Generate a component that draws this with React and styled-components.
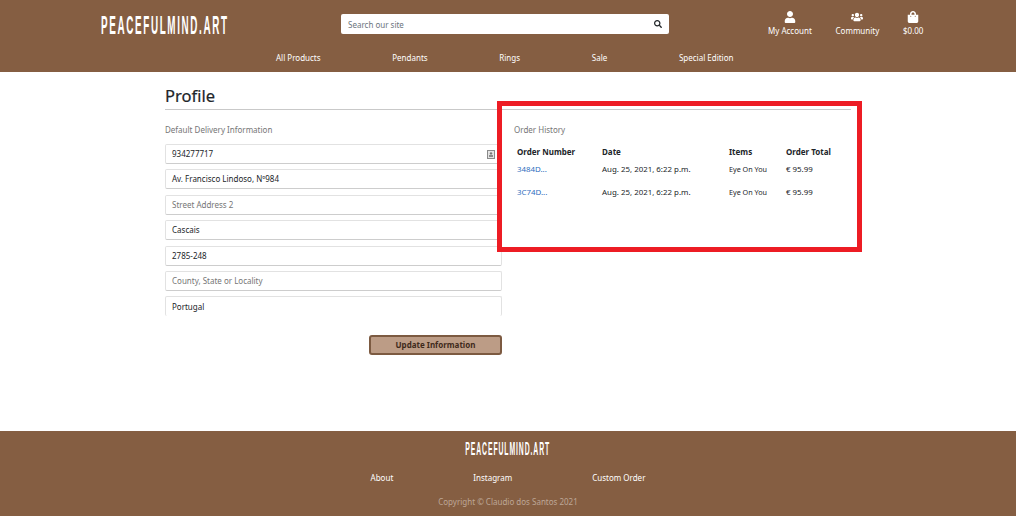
import React from "react";
import styled, { createGlobalStyle } from "styled-components";
import { FaUser, FaUsers, FaShoppingBag, FaSearch } from "react-icons/fa";

const Global = createGlobalStyle`
  html, body { margin: 0; padding: 0; background: #fff; }
  body { font-family: "Noto Sans", "Open Sans", sans-serif; color: #212529; }
  * { box-sizing: border-box; }
`;

const Page = styled.div`
  position: relative;
  width: 1016px;
  height: 516px;
  overflow: hidden;
  display: flex;
  flex-direction: column;
`;

const Header = styled.header`
  height: 72px;
  background: #855e42;
  color: #fff;
  display: flex;
  flex-direction: column;
`;

const TopRow = styled.div`
  height: 51px;
  padding: 10px 0 0 101px;
  display: flex;
  align-items: flex-start;
`;

const Logo = styled.div`
  font-family: "Liberation Sans", sans-serif;
  font-weight: 700;
  color: #fff;
  white-space: nowrap;
  transform-origin: ${p => (p.$small ? "center" : "left")} center;
  transform: scaleX(0.38);
  font-size: ${p => (p.$small ? 18 : 26)}px;
  line-height: ${p => (p.$small ? 20 : 30)}px;
  letter-spacing: ${p => (p.$small ? 2.4 : 4.3)}px;
`;

const LogoSlot = styled.div`
  width: 240px;
  flex: none;
`;

const Search = styled.div`
  width: 328px;
  height: 20px;
  margin-top: 4px;
  background: #fff;
  border-radius: 2px;
  display: flex;
  align-items: center;
  justify-content: space-between;
  padding: 0 7px 0 7px;
  font-size: 8px;
  color: #6c757d;
  svg { color: #212529; font-size: 8px; }
`;

const Account = styled.div`
  margin-left: 99px;
  display: flex;
  gap: 23.7px;
  margin-top: 1px;
`;

const AccountItem = styled.div`
  display: flex;
  flex-direction: column;
  align-items: center;
  font-size: 8px;
  line-height: 11px;
  gap: 2px;
  color: #fff;
  svg { font-size: 12px; display: block; }
`;

const Nav = styled.nav`
  padding-left: 276px;
  display: flex;
  gap: 71.7px;
  font-size: 8px;
  line-height: 14px;
`;

const Main = styled.main`
  flex: 1;
  padding: 12px 0 0 165px;
  width: 851px;
`;

const Title = styled.h1`
  margin: 0 0 1px;
  font-size: 16.5px;
  line-height: 24px;
  font-weight: 400;
  color: #212529;
  -webkit-text-stroke: 0.2px #212529;
`;

const Rule = styled.hr`
  margin: 0;
  border: 0;
  border-top: 1px solid #c9c9c9;
  margin-bottom: 14px;
`;

const Columns = styled.div`
  display: grid;
  grid-template-columns: 337px 337px;
  gap: 12px;
`;

const Caption = styled.div`
  font-size: 8px;
  line-height: 12px;
  color: #767676;
  margin-bottom: 8px;
`;

const Fields = styled.div`
  display: flex;
  flex-direction: column;
  gap: 5.4px;
`;

const Field = styled.div`
  position: relative;
  height: 20px;
  border: 1px solid #e2e2e2;
  border-bottom: ${p => (p.$open ? "0" : "1px solid #cdcdcd")};
  border-radius: 2px;
  padding: 0 6px;
  font-size: 8px;
  line-height: 18px;
  color: ${p => (p.$placeholder ? "#767676" : "#212529")};
  display: flex;
  align-items: center;
  justify-content: space-between;
`;

const FieldIcon = styled.svg`
  width: 8px;
  height: 9px;
  flex: none;
  margin-right: 0;
`;

const Actions = styled.div`
  display: flex;
  justify-content: flex-end;
  margin-top: 19px;
`;

const Button = styled.button`
  width: 133px;
  height: 20px;
  background: #bc9c86;
  border: 2px solid #7c5a41;
  border-radius: 3px;
  font: 700 8px "Noto Sans", sans-serif;
  color: #3f2a1b;
  padding: 0 0 1px;
`;

const Table = styled.table`
  border-collapse: collapse;
  table-layout: fixed;
  width: 325px;
  margin-top: 10px;
`;

const Th = styled.th`
  text-align: left;
  font-size: 8px;
  font-weight: 700;
  line-height: 12px;
  padding: 0 0 5px 3px;
  width: ${p => p.$w}px;
  color: #212529;
`;

const Td = styled.td`
  font-size: ${p => (p.$small ? 7.2 : 7.9)}px;
  line-height: 12px;
  padding: 0 0 10.5px 3px;
  color: #212529;
  white-space: nowrap;
`;

const OrderLink = styled.a`
  color: #2f6fc0;
  text-decoration: none;
`;

const Highlight = styled.div`
  position: absolute;
  left: 497px;
  top: 101px;
  width: 365px;
  height: 151px;
  border: 5px solid #ed1c24;
  pointer-events: none;
`;

const Footer = styled.footer`
  height: 85px;
  background: #855e42;
  color: #fff;
  display: flex;
  flex-direction: column;
  align-items: center;
  padding-top: 8px;
`;

const FootLinks = styled.div`
  display: flex;
  gap: 80px;
  margin-top: 12px;
  font-size: 8px;
  line-height: 14px;
`;

const Copy = styled.div`
  margin-top: 11px;
  font-size: 8px;
  line-height: 12px;
  color: #bda797;
`;

const orders = [
  ["3484D...", "Aug. 25, 2021, 6:22 p.m.", "Eye On You", "€ 95.99"],
  ["3C74D...", "Aug. 25, 2021, 6:22 p.m.", "Eye On You", "€ 95.99"],
];

const fields = [
  ["934277717", false],
  ["Av. Francisco Lindoso, Nº984", false],
  ["Street Address 2", true],
  ["Cascais", false],
  ["2785-248", false],
  ["County, State or Locality", true],
  ["Portugal", false],
];

export default function App() {
  return (
    <Page>
      <Global />
      <Header>
        <TopRow>
          <LogoSlot><Logo>PEACEFULMIND.ART</Logo></LogoSlot>
          <Search>
            <span>Search our site</span>
            <FaSearch />
          </Search>
          <Account>
            <AccountItem><FaUser /><span>My Account</span></AccountItem>
            <AccountItem><FaUsers /><span>Community</span></AccountItem>
            <AccountItem><FaShoppingBag /><span>$0.00</span></AccountItem>
          </Account>
        </TopRow>
        <Nav>
          <span>All Products</span>
          <span>Pendants</span>
          <span>Rings</span>
          <span>Sale</span>
          <span>Special Edition</span>
        </Nav>
      </Header>
      <Main>
        <Title>Profile</Title>
        <Rule />
        <Columns>
          <section>
            <Caption>Default Delivery Information</Caption>
            <Fields>
              {fields.map(([text, placeholder], i) => (
                <Field key={text} $placeholder={placeholder} $open={i === fields.length - 1}>
                  <span>{text}</span>
                  {i === 0 && (
                    <FieldIcon viewBox="0 0 8 9">
                      <rect x="0.5" y="0.5" width="7" height="8" fill="#e4e4e4" stroke="#8a8a8a" />
                      <circle cx="4" cy="3.4" r="1.2" fill="#777" />
                      <rect x="2" y="5.2" width="4" height="1.6" fill="#777" />
                    </FieldIcon>
                  )}
                </Field>
              ))}
            </Fields>
            <Actions><Button>Update Information</Button></Actions>
          </section>
          <section>
            <Caption>Order History</Caption>
            <Table>
              <thead>
                <tr>
                  <Th $w={85}>Order Number</Th>
                  <Th $w={127}>Date</Th>
                  <Th $w={57}>Items</Th>
                  <Th>Order Total</Th>
                </tr>
              </thead>
              <tbody>
                {orders.map(o => (
                  <tr key={o[0]}>
                    <Td><OrderLink href="#">{o[0]}</OrderLink></Td>
                    <Td>{o[1]}</Td>
                    <Td $small>{o[2]}</Td>
                    <Td>{o[3]}</Td>
                  </tr>
                ))}
              </tbody>
            </Table>
          </section>
        </Columns>
      </Main>
      <Footer>
        <Logo $small>PEACEFULMIND.ART</Logo>
        <FootLinks>
          <span>About</span>
          <span>Instagram</span>
          <span>Custom Order</span>
        </FootLinks>
        <Copy>Copyright © Claudio dos Santos 2021</Copy>
      </Footer>
      <Highlight />
    </Page>
  );
}
